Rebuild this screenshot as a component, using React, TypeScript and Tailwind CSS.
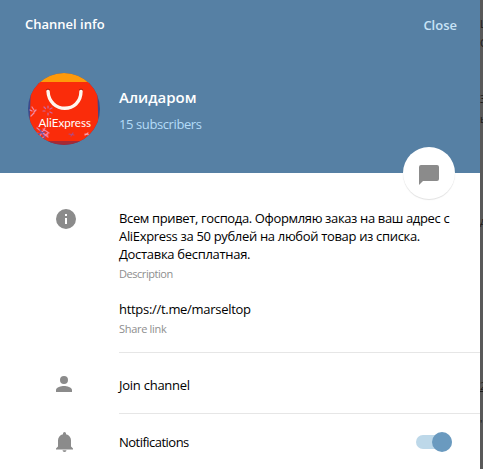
import type { ReactNode } from "react";

function Avatar() {
  return (
    <svg viewBox="0 0 72 72" className="size-[72px] shrink-0">
      <defs>
        <clipPath id="avatar-clip">
          <circle cx="36" cy="36" r="36" />
        </clipPath>
      </defs>
      <g clipPath="url(#avatar-clip)">
        <rect width="72" height="72" fill="#3b4a8c" />
        <path d="M0 0h72v10H0z" fill="#ff9a0a" />
        <path d="M3 9h66l2 59H1z" fill="#fa2c0a" />
        <path d="M0 68h72v4H0z" fill="#a52a35" />
        <path d="M20 18C21 41 53 41 53 18" fill="none" stroke="#fff6ee" strokeWidth="3.4" strokeLinecap="round" />
        <path d="M18 17q2-2 4 0M51 17q2-2 4 0" fill="none" stroke="#a81b09" strokeWidth="1" />
        <g strokeLinecap="round" strokeWidth="1.2" fill="none">
          <path d="M16 34l1.500 1.500M20 33v2M15 38h2M20 40v2M22 36l2-1M22 39l2 1" stroke="#c96aa8" />
          <path d="M4 34l2 3M6 40l-3 3M2 37l2 1M8 37l-2 2" stroke="#ef8caa" />
          <path d="M9 55l11 9M11 64l6-9M8 60l12 2M15 56l6 4M12 67l8-7" stroke="#ef80a4" />
          <path d="M12 57l5 8M9 61l8-2" stroke="#6950a5" />
          <path d="M41 61l5 1M45 60l-2 3" stroke="#b14a83" />
          <path d="M57 61l4 1M60 60l-3 2" stroke="#f5a0ae" />
        </g>
        <text x="10.500" y="54" fontSize="11.500" textLength="52.500" lengthAdjust="spacingAndGlyphs" fill="#fff" fontFamily="Lato, sans-serif">
          AliExpress
        </text>
      </g>
    </svg>
  );
}

function Row({ icon, children, className }: { icon: ReactNode; children: ReactNode; className: string }) {
  return (
    <div className={`flex ${className}`}>
      <div className="flex w-[119px] shrink-0 pl-[52px] text-[#8b8b8b]">{icon}</div>
      {children}
    </div>
  );
}

export default function App() {
  return (
    <div className="flex h-[469px] w-[483px] overflow-hidden whitespace-nowrap bg-white font-['Open_Sans','Noto_Sans',sans-serif] text-[13px] leading-[18px] text-black">
      <main className="flex w-[480px] shrink-0 flex-col">
        <header className="relative flex h-[173px] shrink-0 flex-col bg-[#5680a4]">
          <div className="flex items-start justify-between pr-[23px] pl-[25px]">
            <h1 className="mt-[15px] text-[13px] font-semibold text-white">Channel info</h1>
            <button className="mt-4 text-[13px] leading-[18px] font-semibold text-[#c9e4f7]">Close</button>
          </div>
          <div className="mt-[39px] flex pl-7">
            <Avatar />
            <div className="ml-[19px] flex flex-col pt-[14px]">
              <h2 className="text-[15px] leading-5 font-semibold text-white">Алидаром</h2>
              <p className="mt-2 text-[13px] tracking-[-0.4px] text-[#b4dcf8]">15 subscribers</p>
            </div>
          </div>
          <button className="absolute top-[147px] left-[403px] flex size-[52px] items-center justify-center rounded-full bg-white shadow-[0_1px_1px_rgba(0,0,0,0.12)]">
            <svg viewBox="0 0 20 20" className="mt-[3px] size-5 fill-[#8b8b8b]">
              <path d="M2 0h16a2 2 0 0 1 2 2v12a2 2 0 0 1-2 2H4l-4 4V2a2 2 0 0 1 2-2z" />
            </svg>
          </button>
        </header>
        <Row
          className="h-[179px] shrink-0 pt-9"
          icon={
            <svg viewBox="2 2 20 20" className="ml-[4px] size-5 fill-current">
              <path d="M12 2a10 10 0 1 0 0 20 10 10 0 0 0 0-20zm1 15h-2v-6h2v6zm0-8h-2V7h2v2z" />
            </svg>
          }
        >
          <div>
            <p className="tracking-[-0.36px]">Всем привет, господа. Оформляю заказ на ваш адрес с</p>
            <p className="tracking-[-0.33px]">AliExpress за 50 рублей на любой товар из списка.</p>
            <p className="tracking-[-0.3px]">Доставка бесплатная.</p>
            <p className="mt-[3px] text-[11px] leading-4 tracking-[-0.45px] text-[#8e8e8e]">Description</p>
            <p className="mt-[18px] tracking-[-0.3px]">https://t.me/marseltop</p>
            <p className="mt-[3px] text-[11px] leading-4 tracking-[-0.3px] text-[#8e8e8e]">Share link</p>
          </div>
        </Row>
        <div className="ml-[119px] h-px shrink-0 bg-[#e6e6e6]" />
        <Row
          className="h-[60px] shrink-0 pt-[23px]"
          icon={
            <svg viewBox="4 4 16 16" className="ml-[4px] size-4 fill-current">
              <path d="M12 12a4 4 0 1 0 0-8 4 4 0 0 0 0 8zm0 2c-2.7 0-8 1.3-8 4v2h16v-2c0-2.7-5.3-4-8-4z" />
            </svg>
          }
        >
          <span className="tracking-[-0.25px]">Join channel</span>
        </Row>
        <div className="ml-[119px] h-px shrink-0 bg-[#e6e6e6]" />
        <Row
          className="pt-[18px]"
          icon={
            <svg viewBox="0 0 17 20" className="ml-1 h-5 w-[17px] fill-current">
              <path d="M8.500 0a1.500 1.500 0 0 0-1.500 1.500v.8C4 3 2 5.300 2 8.300V14.500L0 16.500V17.500h17v-1L15 14.500V8.300C15 5.300 13 3 10 2.300v-.8A1.500 1.500 0 0 0 8.500 0zM6.500 18.200h4a2 1.800 0 0 1-4 0z" />
            </svg>
          }
        >
          <span className="mt-px flex-1 tracking-[-0.52px]">Notifications</span>
          <span className="mt-[3px] mr-7 flex h-[14px] w-9 items-center justify-end rounded-full bg-[#bdd8e9]">
            <span className="size-5 shrink-0 rounded-full bg-[#6a9abf]" />
          </span>
        </Row>
      </main>
      <aside className="flex w-[3px] shrink-0 flex-col overflow-hidden bg-[#595959] text-[11px] leading-4 text-[#1c1c1c]">
        <span className="mt-4">Ц</span>
        <span className="mt-[3px]">О</span>
        <span className="mt-10">Э</span>
        <span className="mt-1">ы</span>
        <span className="mt-[86px]">д</span>
        <span className="mt-[149px] underline">2</span>
        <span className="mt-[22px]">'</span>
      </aside>
    </div>
  );
}
